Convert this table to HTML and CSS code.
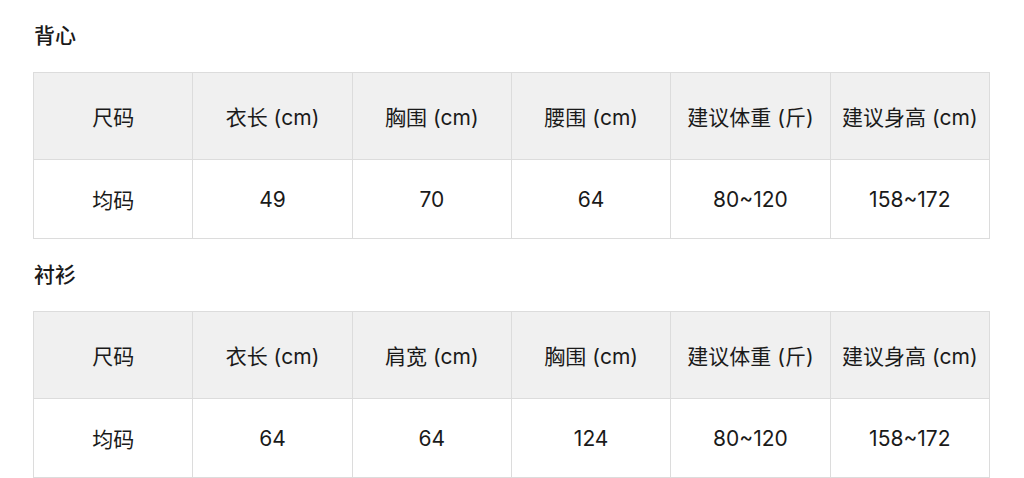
FILE: index.html
```html
<!DOCTYPE html>
<html lang="zh-CN">
<head>
<meta charset="utf-8">
<title>尺码表</title>
<link rel="stylesheet" href="styles.css">
</head>
<body>
<div class="page">
  <section class="size-section">
    <h2 class="size-title">背心</h2>
    <table class="size-table">
      <thead>
        <tr>
          <th>尺码</th><th>衣长 (cm)</th><th>胸围 (cm)</th><th>腰围 (cm)</th><th>建议体重 (斤)</th><th>建议身高 (cm)</th>
        </tr>
      </thead>
      <tbody>
        <tr>
          <td>均码</td><td>49</td><td>70</td><td>64</td><td>80~120</td><td>158~172</td>
        </tr>
      </tbody>
    </table>
  </section>
  <section class="size-section">
    <h2 class="size-title">衬衫</h2>
    <table class="size-table">
      <thead>
        <tr>
          <th>尺码</th><th>衣长 (cm)</th><th>肩宽 (cm)</th><th>胸围 (cm)</th><th>建议体重 (斤)</th><th>建议身高 (cm)</th>
        </tr>
      </thead>
      <tbody>
        <tr>
          <td>均码</td><td>64</td><td>64</td><td>124</td><td>80~120</td><td>158~172</td>
        </tr>
      </tbody>
    </table>
  </section>
</div>
</body>
</html>
```

FILE: styles.css
```css
html, body {
  margin: 0;
  padding: 0;
  background: #fff;
}

.page {
  padding: 21px 34px 0 33px;
  font-family: Inter, "Noto Sans CJK SC", sans-serif;
  color: #1a1a1a;
}

.size-section {
  margin-bottom: 21px;
}

.size-title {
  margin: 0 0 21px 1px;
  font-size: 21px;
  line-height: 30px;
  font-weight: 500;
}

.size-table {
  width: 957px;
  border-collapse: collapse;
  table-layout: fixed;
  font-size: 21px;
}

.size-table th,
.size-table td {
  border: 1px solid #dcdcdc;
  text-align: center;
  font-weight: 400;
  padding: 0;
  white-space: nowrap;
}

.size-table th {
  background: #f0f0f0;
  height: 86px;
}

.size-table td {
  height: 78px;
}
```
